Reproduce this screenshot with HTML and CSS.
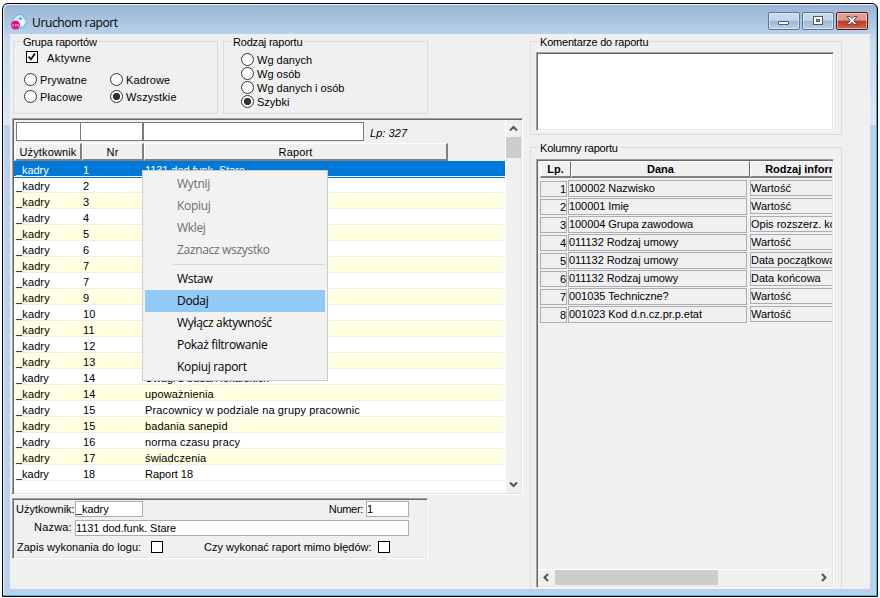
FILE: index.html
```
<!DOCTYPE html>
<html lang="pl">
<head>
	<title>Uruchom raport</title>
	<meta charset="utf-8" />
	<link rel="stylesheet" href="styles.css">
</head>
<body>
	<div class="window">
		<div class="titlebar">
			<svg class="app-icon" width="16" height="16" viewBox="0 0 16 16">
				<circle cx="8.5" cy="7.5" r="6.800" fill="#d9f1fa" stroke="#58bde3" stroke-width="1.200" stroke-dasharray="3 0.800"/>
				<path d="M3 5l3-3M6 4l3 2M11 2l3 4M12 9l2 2M9 12l3 1" stroke="#7fd0ec" fill="none"/>
				<path d="M9 6.500h4v4h-3z" fill="#fff"/>
				<circle cx="9.500" cy="4.500" r="1" fill="#1c4f78"/>
				<circle cx="4.500" cy="11" r="4.500" fill="#e5107f"/>
				<path d="M2 10v2.500M4 10.500h1.500M4 12h1.500M7 10v2.500" stroke="#fff" stroke-width="0.800"/>
			</svg>
			<span class="title">Uruchom raport</span>
			<div class="win-buttons">
				<div class="win-btn">
					<svg width="30" height="16"><rect x="9.500" y="8.500" width="10" height="3" rx="0.500" fill="#fff" stroke="#50586b"/></svg>
				</div>
				<div class="win-btn">
					<svg width="30" height="16"><rect x="10.500" y="3.500" width="9" height="8" fill="#fff" stroke="#50586b"/><rect x="13.500" y="6.500" width="3" height="2" fill="#8fb0d0" stroke="#50586b"/></svg>
				</div>
				<div class="win-btn close">
					<svg width="30" height="16"><path d="M10 3.500h3l2 2.200 2-2.200h3l-3.300 4 3.300 4h-3l-2-2.200-2 2.200h-3l3.300-4z" fill="#fff" stroke="#5a4650"/></svg>
				</div>
			</div>
		</div>

		<div class="client">
			<div class="left">
				<div class="filters">
					<div class="group">
						<span class="legend">Grupa raportów</span>
						<label class="check-row">
							<span class="checkbox"><svg width="10" height="10"><path d="M1.500 4.500l2.500 2.800L8 1.500" stroke="#111" stroke-width="1.800" fill="none"/></svg></span>
							<span>Aktywne</span>
						</label>
						<div class="radio-grid">
							<label class="radio-row"><span class="radio"></span>Prywatne</label>
							<label class="radio-row"><span class="radio"></span>Kadrowe</label>
							<label class="radio-row"><span class="radio"></span>Płacowe</label>
							<label class="radio-row"><span class="radio on"></span>Wszystkie</label>
						</div>
					</div>
					<div class="group">
						<span class="legend">Rodzaj raportu</span>
						<div class="radio-list">
							<label class="radio-row"><span class="radio"></span>Wg danych</label>
							<label class="radio-row"><span class="radio"></span>Wg osób</label>
							<label class="radio-row"><span class="radio"></span>Wg danych i osób</label>
							<label class="radio-row"><span class="radio on"></span>Szybki</label>
						</div>
					</div>
				</div>

				<div class="report-list sunken">
					<div class="list-main">
						<div class="search-row">
							<span class="search s-user"></span>
							<span class="search s-nr"></span>
							<span class="search s-name"></span>
							<span class="lp">Lp: 327</span>
						</div>
						<div class="list-head">
							<span class="head-cell">Użytkownik</span>
							<span class="head-cell">Nr</span>
							<span class="head-cell">Raport</span>
						</div>
						<div class="list-rows">
							<div class="row selected"><span>_kadry</span><span>1</span><span>1131 dod.funk. Stare</span></div>
							<div class="row"><span>_kadry</span><span>2</span><span></span></div>
							<div class="row"><span>_kadry</span><span>3</span><span></span></div>
							<div class="row"><span>_kadry</span><span>4</span><span></span></div>
							<div class="row"><span>_kadry</span><span>5</span><span></span></div>
							<div class="row"><span>_kadry</span><span>6</span><span></span></div>
							<div class="row"><span>_kadry</span><span>7</span><span></span></div>
							<div class="row"><span>_kadry</span><span>7</span><span></span></div>
							<div class="row"><span>_kadry</span><span>9</span><span></span></div>
							<div class="row"><span>_kadry</span><span>10</span><span></span></div>
							<div class="row"><span>_kadry</span><span>11</span><span></span></div>
							<div class="row"><span>_kadry</span><span>12</span><span></span></div>
							<div class="row"><span>_kadry</span><span>13</span><span></span></div>
							<div class="row tight"><span>_kadry</span><span>14</span><span>Uwagi z badań lekarskich</span></div>
							<div class="row"><span>_kadry</span><span>14</span><span>upoważnienia</span></div>
							<div class="row"><span>_kadry</span><span>15</span><span>Pracownicy w podziale na grupy pracownic</span></div>
							<div class="row"><span>_kadry</span><span>15</span><span>badania sanepid</span></div>
							<div class="row"><span>_kadry</span><span>16</span><span>norma czasu pracy</span></div>
							<div class="row"><span>_kadry</span><span>17</span><span>świadczenia</span></div>
							<div class="row tight"><span>_kadry</span><span>18</span><span>Raport 18</span></div>
						</div>
					</div>
					<div class="vscroll">
						<svg class="arrow" width="15" height="17"><path d="M4 10.500l3.500-3.500 3.500 3.500" class="arrow-line"/></svg>
						<div class="vthumb"></div>
						<svg class="arrow" width="15" height="17"><path d="M4 6.500l3.500 3.500 3.500-3.500" class="arrow-line"/></svg>
					</div>
				</div>

				<div class="details sunken">
					<div class="detail-row">
						<span class="label l-user">Użytkownik:</span>
						<span class="input i-user">_kadry</span>
						<span class="label l-num">Numer:</span>
						<span class="input i-num">1</span>
					</div>
					<div class="detail-row">
						<span class="label l-name">Nazwa:</span>
						<span class="input i-name">1131 dod.funk. Stare</span>
					</div>
					<div class="detail-row last">
						<span class="label l-log">Zapis wykonania do logu:</span>
						<span class="checkbox"></span>
						<span class="label l-err">Czy wykonać raport mimo błędów:</span>
						<span class="checkbox"></span>
					</div>
				</div>
			</div>

			<div class="right">
				<div class="group comments">
					<span class="legend">Komentarze do raportu</span>
					<div class="comment-box sunken"></div>
				</div>
				<div class="group columns">
					<span class="legend">Kolumny raportu</span>
					<div class="column-box sunken">
						<div class="col-head">
							<span>Lp.</span><span>Dana</span><span>Rodzaj informacji</span>
						</div>
						<div class="col-rows">
							<div class="col-row"><span>1</span><span>100002 Nazwisko</span><span>Wartość</span></div>
							<div class="col-row"><span>2</span><span>100001 Imię</span><span>Wartość</span></div>
							<div class="col-row"><span>3</span><span>100004 Grupa zawodowa</span><span>Opis rozszerz. kodu</span></div>
							<div class="col-row"><span>4</span><span>011132 Rodzaj umowy</span><span>Wartość</span></div>
							<div class="col-row"><span>5</span><span>011132 Rodzaj umowy</span><span>Data początkowa</span></div>
							<div class="col-row"><span>6</span><span>011132 Rodzaj umowy</span><span>Data końcowa</span></div>
							<div class="col-row"><span>7</span><span>001035 Techniczne?</span><span>Wartość</span></div>
							<div class="col-row"><span>8</span><span>001023 Kod d.n.cz.pr.p.etat</span><span>Wartość</span></div>
						</div>
						<div class="hscroll">
							<svg class="arrow" width="17" height="15"><path d="M10 4L6.500 7.500 10 11" class="arrow-line"/></svg>
							<div class="hthumb"></div>
							<svg class="arrow" width="17" height="15"><path d="M7 4l3.500 3.500L7 11" class="arrow-line"/></svg>
						</div>
					</div>
				</div>
			</div>
		</div>
	</div>

	<div class="menu">
		<div class="menu-item disabled">Wytnij</div>
		<div class="menu-item disabled">Kopiuj</div>
		<div class="menu-item disabled">Wklej</div>
		<div class="menu-item disabled">Zaznacz wszystko</div>
		<div class="menu-sep"></div>
		<div class="menu-item">Wstaw</div>
		<div class="menu-item active">Dodaj</div>
		<div class="menu-item">Wyłącz aktywność</div>
		<div class="menu-item">Pokaż filtrowanie</div>
		<div class="menu-item">Kopiuj raport</div>
	</div>
</body>
</html>
```
FILE: styles.css
```
* {
	box-sizing: border-box;
}
body {
	margin: 0;
	height: 598px;
	padding: 3px 2px 1px 2px;
	overflow: hidden;
	background-color: #fff;
	color: #000;
	font-family: "Liberation Sans", Arial, sans-serif;
	font-size: 11px;
	line-height: 13px;
	letter-spacing: 0.13px;
	white-space: nowrap;
}
svg {
	display: block;
}

/* Window frame */
.window {
	width: 876px;
	height: 594px;
	border: 1px solid #000;
	border-radius: 6px 6px 0 0;
	box-shadow: inset -1px -1px 0 #2fc0dc, inset 1px 1px 0 #e6f0fa;
	background: linear-gradient(#98b4d2, #b9d1ea 30px) no-repeat 0 0 / 100% 30px,
		linear-gradient(#c4d8ed, #dce8f5) no-repeat 0 30px / 100% 91px,
		#b9d1ea;
	padding: 0 7px 7px 7px;
}
.titlebar {
	display: flex;
	align-items: center;
	height: 30px;
	padding: 4px 0 0 1px;
}
.app-icon {
	margin-top: 1px;
}
.title {
	flex: 1;
	padding: 2px 0 0 5px;
	font: 12px "Open Sans", sans-serif;
	letter-spacing: -0.37px;
}
.win-buttons {
	display: flex;
	gap: 2px;
	margin-right: 2px;
}
.win-btn {
	width: 32px;
	height: 18px;
	border: 1px solid #5f7390;
	border-radius: 2px;
	box-shadow: inset 0 0 0 1px rgba(255, 255, 255, 0.5);
	background: linear-gradient(#c5d8eb 45%, #9db8d5 50%, #b9d0e8);
}
.win-btn.close {
	border-color: #501421;
	background: linear-gradient(#dc9c8e 45%, #b9361c 50%, #cf6a4e);
}
.client {
	display: flex;
	width: 860px;
	height: 555px;
	overflow: hidden;
	background-color: #f0f0f0;
}

/* Group boxes */
.group {
	position: relative;
	border: 1px solid #dcdcdc;
}
.legend {
	position: absolute;
	top: -6px;
	left: 7px;
	padding: 0 2px;
	background-color: #f0f0f0;
	letter-spacing: -0.2px;
}
.sunken {
	padding: 1px;
	border: 1px solid;
	border-color: #a0a0a0 #fff #fff #a0a0a0;
	box-shadow: inset 1px 1px 0 #696969, inset -1px -1px 0 #e3e3e3;
}
.left {
	width: 520px;
	padding: 7px 0 0 2px;
}
.filters {
	display: flex;
	gap: 5px;
	padding-left: 1px;
}
.filters .group {
	width: 205px;
	height: 73px;
}
.checkbox {
	width: 12px;
	height: 12px;
	border: 1px solid #000;
	background-color: #fff;
}
.check-row {
	display: flex;
	gap: 9px;
	height: 22px;
	padding: 9px 0 0 12px;
	line-height: 15px;
	letter-spacing: 0.4px;
}
.radio-grid {
	display: grid;
	grid-template-columns: 86px 90px;
	grid-auto-rows: 17px;
	padding: 9px 0 0 10px;
}
.radio-list {
	padding: 11px 0 0 17px;
	letter-spacing: 0;
}
.radio-list .radio-row {
	height: 14px;
}
.radio-row {
	display: flex;
	gap: 3px;
	line-height: 15px;
}
.radio {
	width: 13px;
	height: 13px;
	border: 1px solid #333;
	border-radius: 50%;
	background-color: #fff;
}
.radio.on {
	background: radial-gradient(circle, #333 3.3px, #fff 4px);
}

/* Report list */
.report-list {
	display: flex;
	width: 511px;
	height: 377px;
	margin-top: 4px;
}
.list-main {
	display: flex;
	flex-direction: column;
	width: 491px;
}
.search-row {
	display: flex;
	height: 23px;
	padding: 2px 0 0 2px;
}
.search {
	height: 19px;
	border: 1px solid #7a7a7a;
	background-color: #fff;
}
.s-user {
	width: 65px;
}
.s-nr {
	width: 63px;
	margin-left: -1px;
}
.s-name {
	width: 221px;
}
.lp {
	padding: 5px 0 0 6px;
	font-style: italic;
	letter-spacing: 0.05px;
}
.list-head {
	display: grid;
	grid-template-columns: 67px 62px 304px;
	height: 18px;
	padding-left: 1px;
}
.head-cell {
	padding-top: 2px;
	border-style: solid;
	border-width: 1px 2px 2px 1px;
	border-color: #fff #808080 #808080 #fff;
	text-align: center;
}
.list-rows {
	flex: 1;
	background-color: #fff;
}
.row {
	display: grid;
	grid-template-columns: 67px 62px 1fr;
	height: 16px;
	padding: 3px 0 0 2px;
	line-height: 12px;
	border-bottom: 1px solid #ededf3;
}
.row:nth-child(odd) {
	background-color: #ffffe1;
}
.row.tight {
	letter-spacing: -0.03px;
}
.row.selected {
	color: #fff;
	background-color: #0078d7;
	border-bottom-color: #fff;
	letter-spacing: -0.07px;
}
.row.selected + .row {
	box-shadow: inset 0 1px 0 #0078d7;
}
.vscroll {
	display: flex;
	flex-direction: column;
	width: 16px;
	border-left: 1px solid #fff;
}
.vthumb {
	height: 21px;
	margin-bottom: auto;
	background-color: #cdcdcd;
}
.arrow-line {
	fill: none;
	stroke: #555;
	stroke-width: 2;
}

/* Details under the list */
.details {
	width: 416px;
	height: 61px;
	margin-top: 3px;
	padding-top: 2px;
	letter-spacing: 0;
}
.detail-row {
	display: flex;
	height: 19px;
}
.detail-row.last {
	padding-top: 2px;
}
.label {
	padding-top: 2px;
}
.l-user {
	width: 61px;
	padding-left: 2px;
}
.l-name {
	width: 61px;
	padding-left: 20px;
	padding-top: 1px;
	letter-spacing: 0.2px;
}
.l-num {
	width: 223px;
	padding-right: 3px;
	text-align: right;
	letter-spacing: -0.3px;
}
.l-log {
	width: 137px;
	padding: 0 0 0 3px;
}
.l-err {
	width: 215px;
	padding: 0 0 0 41px;
}
.input {
	height: 16px;
	padding-top: 1px;
	border: 1px solid #abadb3;
	background-color: #fff;
	letter-spacing: -0.06px;
}
.i-user {
	width: 68px;
}
.i-num {
	width: 43px;
}
.i-name {
	width: 334px;
}

/* Right side */
.right {
	width: 312px;
	padding-top: 7px;
}
.comments {
	height: 94px;
	padding: 10px 7px 0 5px;
}
.comment-box {
	height: 79px;
	width: 298px;
	background-color: #fff;
}
.columns {
	height: 445px;
	margin-top: 12px;
	padding: 11px 0 0 5px;
}
.column-box {
	display: flex;
	flex-direction: column;
	width: 298px;
	height: 429px;
}
.col-head,
.col-rows {
	overflow: hidden;
}
.col-head {
	display: grid;
	grid-template-columns: 31px 179px 122px;
	height: 17px;
	padding-left: 2px;
	font-weight: bold;
	text-align: center;
	letter-spacing: 0;
}
.col-head span {
	padding-top: 1px;
	border-style: solid;
	border-width: 1px 1px 2px 1px;
	border-color: #fff #696969 #808080 #fff;
}
.col-rows {
	flex: 1;
	padding: 2px 0 0 2px;
	letter-spacing: 0;
}
.col-row {
	display: grid;
	grid-template-columns: 27px 179px 120px;
	column-gap: 1px;
	height: 18px;
}
.col-row span {
	height: 17px;
	padding-top: 1px;
	border: 1px solid #abadb3;
}
.col-row span:first-child {
	height: 16px;
	margin-top: 1px;
	text-align: right;
}
.col-row span:nth-child(2) {
	letter-spacing: -0.06px;
}
.col-row span:last-child {
	height: 16px;
	margin-left: 2px;
}
.hscroll {
	display: flex;
	height: 17px;
	border-top: 1px solid #fff;
}
.hthumb {
	width: 163px;
	height: 15px;
	margin-right: auto;
	background-color: #cdcdcd;
}

/* Context menu over the list */
.menu {
	position: absolute;
	top: 170px;
	left: 142px;
	width: 186px;
	height: 211px;
	padding: 2px;
	border: 1px solid #ccc;
	background-color: #f2f2f2;
	font: 12px/22px "Open Sans", sans-serif;
	letter-spacing: -0.32px;
}
.menu-item {
	height: 22px;
	padding-left: 32px;
}
.menu-item.disabled {
	color: #6d6d6d;
}
.menu-item.active {
	background-color: #91c9f7;
}
.menu-sep {
	height: 1px;
	margin: 3px 0 3px 28px;
	background-color: #d7d7d7;
}
```
